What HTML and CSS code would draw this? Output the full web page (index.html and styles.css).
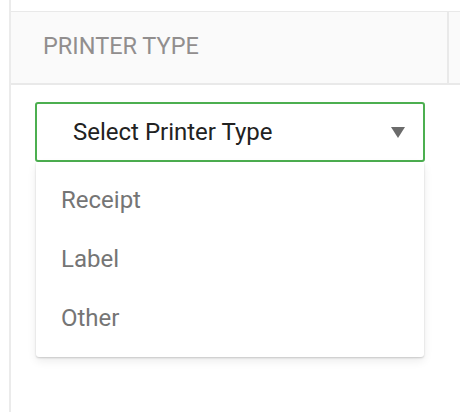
FILE: index.html
```html
<!DOCTYPE html>
<html>
<head>
<meta charset="utf-8">
<link rel="stylesheet" href="styles.css">
</head>
<body>
<div class="frame">
  <div class="head">
    <div class="th">PRINTER TYPE</div>
    <div class="th-rest"></div>
  </div>
  <div class="cell">
    <div class="select">
      <span class="select-label">Select Printer Type</span>
      <svg class="caret" width="14" height="11" viewBox="0 0 14 11"><path d="M0 0H14L7 11Z" fill="#6b6b6b"/></svg>
    </div>
    <ul class="menu">
      <li class="item">Receipt</li>
      <li class="item">Label</li>
      <li class="item">Other</li>
    </ul>
  </div>
</div>
</body>
</html>
```
FILE: styles.css
```css
html, body {
  margin: 0;
  padding: 0;
  background: #ffffff;
  font-family: Roboto, "Liberation Sans", sans-serif;
}
.frame {
  margin-left: 9px;
  border-left: 2px solid #ebebeb;
  height: 412px;
  box-sizing: border-box;
  padding-top: 11px;
}
.head {
  display: flex;
  height: 74px;
  box-sizing: border-box;
  border-top: 1.5px solid #e9e9e9;
  border-bottom: 2px solid #e9e9e9;
  background: #fafafa;
}
.th {
  width: 438px;
  box-sizing: border-box;
  border-right: 2px solid #e9e9e9;
  padding: 0 0 3px 32px;
  display: flex;
  align-items: center;
  font-size: 23.5px;
  color: #918e8e;
}
.th-rest {
  flex: 1;
}
.cell {
  padding: 17px 0 0 24px;
}
.select {
  width: 390px;
  height: 60px;
  box-sizing: border-box;
  border: 2px solid #4caf50;
  border-radius: 3px;
  display: flex;
  align-items: center;
  justify-content: space-between;
  padding: 0 18px 0 36px;
  font-size: 24px;
  color: #222222;
}
.caret {
  display: block;
}
.menu {
  list-style: none;
  margin: 0 0 0 1px;
  padding: 8px 0 10px;
  width: 388px;
  box-sizing: border-box;
  background: #ffffff;
  border-radius: 0 0 3px 3px;
  box-shadow: 0 1px 2px rgba(0,0,0,0.18), 0 4px 10px rgba(0,0,0,0.08);
}
.item {
  height: 59px;
  display: flex;
  align-items: center;
  padding-left: 25px;
  font-size: 24px;
  color: #757575;
}
```
